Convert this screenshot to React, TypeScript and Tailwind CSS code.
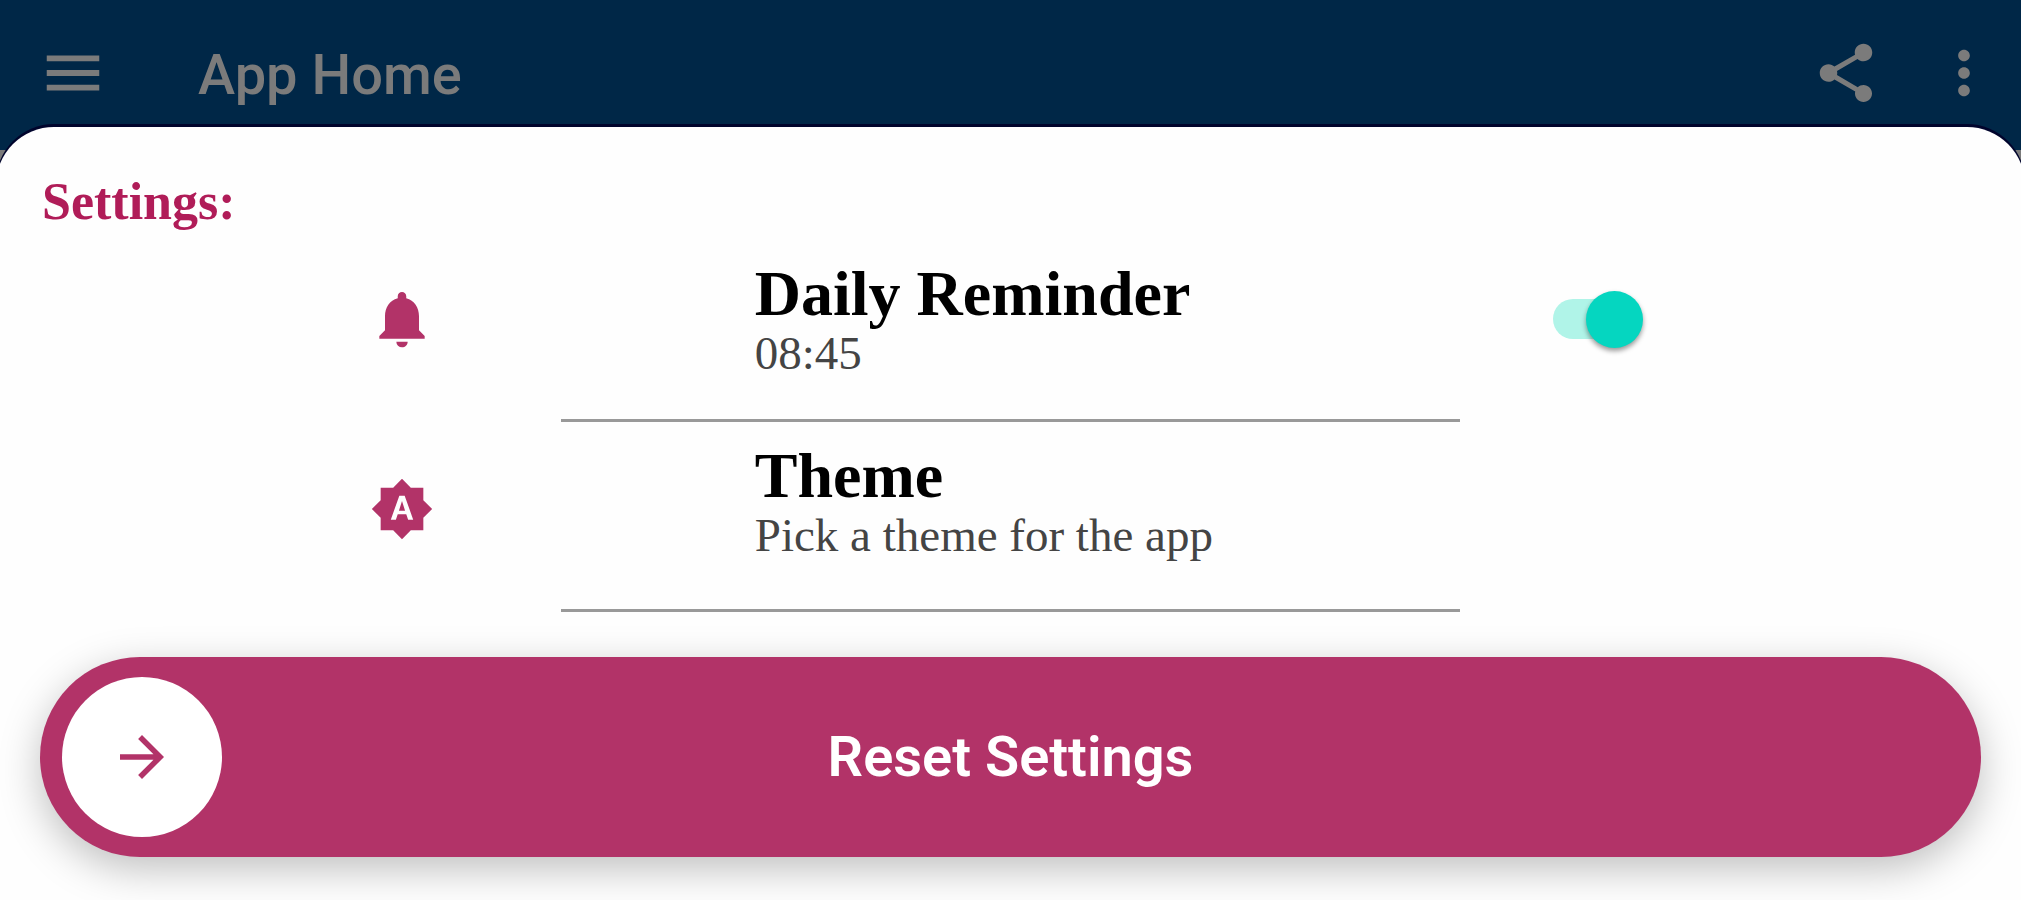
import { useState } from "react";
import type { ReactNode } from "react";
import {
  MdArrowForward,
  MdBrightnessAuto,
  MdMenu,
  MdMoreVert,
  MdNotifications,
  MdShare,
} from "react-icons/md";

function Header() {
  return (
    <header className="flex h-[150px] items-center bg-[#002747] pr-[22px] pb-1 pl-[38px] text-[#7b7b7b]">
      <button type="button" aria-label="Menu">
        <MdMenu className="size-[70px]" />
      </button>
      <h1 className="ml-[90px] pt-1 text-[56px] leading-[64px] font-medium">
        App Home
      </h1>
      <div className="ml-auto flex gap-12">
        <button type="button" aria-label="Share">
          <MdShare className="size-[70px]" />
        </button>
        <button type="button" aria-label="More options">
          <MdMoreVert className="size-[70px]" />
        </button>
      </div>
    </header>
  );
}

type SettingRowProps = {
  icon: ReactNode;
  textClassName: string;
  children: ReactNode;
  action?: ReactNode;
};

function SettingRow({ icon, textClassName, children, action }: SettingRowProps) {
  return (
    <li className="grid min-h-[190px] grid-cols-[27.75%_44.5%_1fr]">
      <div className="flex w-full items-center justify-end pr-[125px] pb-4 text-[#b23368]">
        <span className="flex w-[68px] justify-center">{icon}</span>
      </div>
      <div
        className={`border-b-[3px] border-[#999] pl-[194px] font-['Liberation_Serif',serif] ${textClassName}`}
      >
        {children}
      </div>
      <div className="flex items-center pb-4 pl-[93px]">{action}</div>
    </li>
  );
}

export default function App() {
  const [reminder, setReminder] = useState(true);

  return (
    <div className="flex min-h-screen flex-col overflow-x-hidden bg-[#7b7b7b] font-[Roboto,sans-serif]">
      <Header />
      {/* slightly wider than the window, so the corners are cut off at the sides */}
      <main className="-mx-1 -mt-[23px] grow rounded-t-[58px] bg-[#fefefe] px-1 pb-8 shadow-[0_-3px_0_#00042c]">
        <h2 className="px-[42px] pt-[45px] font-['Liberation_Serif',serif] text-[52px] leading-[60px] font-bold text-[#b01c58]">
          Settings:
        </h2>

        <ul>
          <SettingRow
            icon={<MdNotifications className="size-[68px]" />}
            textClassName="pt-[30px]"
            action={
              <label className="relative flex h-[60px] w-[90px] items-center">
                <input
                  type="checkbox"
                  role="switch"
                  aria-label="Daily Reminder"
                  checked={reminder}
                  onChange={(e) => setReminder(e.target.checked)}
                  className="peer sr-only"
                />
                <span className="h-10 w-20 rounded-full bg-gray-300 peer-checked:bg-[#b0f4e8]" />
                <span className="absolute left-0 size-[57px] rounded-full bg-gray-100 shadow-[0_3px_5px_rgba(0,0,0,0.4)] peer-checked:left-[33px] peer-checked:bg-[#05d6c0]" />
              </label>
            }
          >
            <h3 className="text-[64px] leading-[64px] font-bold text-black">
              Daily Reminder
            </h3>
            <p className="text-[47px] leading-[54px] text-[#444]">08:45</p>
          </SettingRow>

          <SettingRow
            icon={<MdBrightnessAuto className="size-[64px]" />}
            textClassName="pt-[22px]"
          >
            <h3 className="text-[64px] leading-[64px] font-bold text-black">
              Theme
            </h3>
            <p className="text-[47px] leading-[54px] text-[#444]">
              Pick a theme for the app
            </p>
          </SettingRow>
        </ul>

        <div className="px-10 pt-[45px]">
          <button
            type="button"
            className="grid w-full grid-cols-[160px_1fr_160px] items-center rounded-full bg-[#b23368] px-[22px] py-5 text-white shadow-[0_12px_40px_rgba(0,0,0,0.25)]"
          >
            <span className="flex size-40 items-center justify-center rounded-full bg-white text-[#b23368]">
              <MdArrowForward className="size-[66px]" />
            </span>
            <span className="text-[56px] leading-[64px] font-semibold">
              Reset Settings
            </span>
          </button>
        </div>
      </main>
    </div>
  );
}
